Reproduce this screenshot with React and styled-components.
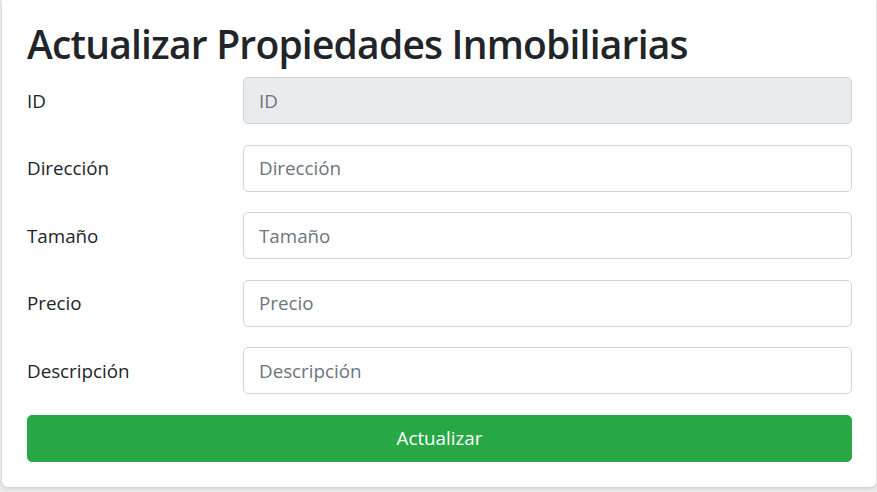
import React from 'react';
import styled, { createGlobalStyle } from 'styled-components';

const GlobalStyle = createGlobalStyle`
  html, body {
    margin: 0;
    padding: 0;
    background: #ececec;
  }
  body {
    font-family: "Open Sans", "Noto Sans", sans-serif;
    color: #212529;
  }
`;

const Page = styled.div`
  padding: 0 1px 0 2px;
  height: 492px;
  box-sizing: border-box;
  overflow: hidden;
`;

const Card = styled.div`
  background: #fff;
  border-radius: 0 0 6px 6px;
  box-shadow: 0 2px 4px rgba(0, 0, 0, 0.12);
  padding: 21px 24px 25px 25px;
`;

const Title = styled.h1`
  margin: 0 0 10px;
  font-size: 39px;
  font-weight: 600;
  line-height: 46px;
  letter-spacing: -0.8px;
`;

const Row = styled.div`
  display: grid;
  grid-template-columns: 216px 1fr;
  align-items: center;
  margin-bottom: 20.5px;
`;

const Label = styled.label`
  font-size: 18.8px;
  line-height: 24px;
`;

const Input = styled.input`
  box-sizing: border-box;
  width: 100%;
  height: 47px;
  padding: 0 15px;
  font-family: inherit;
  font-size: 18.8px;
  color: #495057;
  background: ${p => (p.readOnly ? '#e9ecef' : '#fff')};
  border: 1px solid #ced4da;
  border-radius: 5px;
  outline: none;

  &::placeholder {
    color: #6c757d;
  }
`;

const Button = styled.button`
  display: block;
  width: 100%;
  height: 47px;
  font-family: inherit;
  font-size: 18.8px;
  color: #fff;
  background: #28a745;
  border: 1px solid #28a745;
  border-radius: 5px;
`;

const fields = [
  { label: 'ID', readOnly: true },
  { label: 'Dirección' },
  { label: 'Tamaño' },
  { label: 'Precio' },
  { label: 'Descripción' }
];

export default function App() {
  return (
    <Page>
      <GlobalStyle />
      <Card>
        <Title>Actualizar Propiedades Inmobiliarias</Title>
        {fields.map(f => (
          <Row key={f.label}>
            <Label>{f.label}</Label>
            <Input placeholder={f.label} readOnly={f.readOnly} />
          </Row>
        ))}
        <Button>Actualizar</Button>
      </Card>
    </Page>
  );
}
